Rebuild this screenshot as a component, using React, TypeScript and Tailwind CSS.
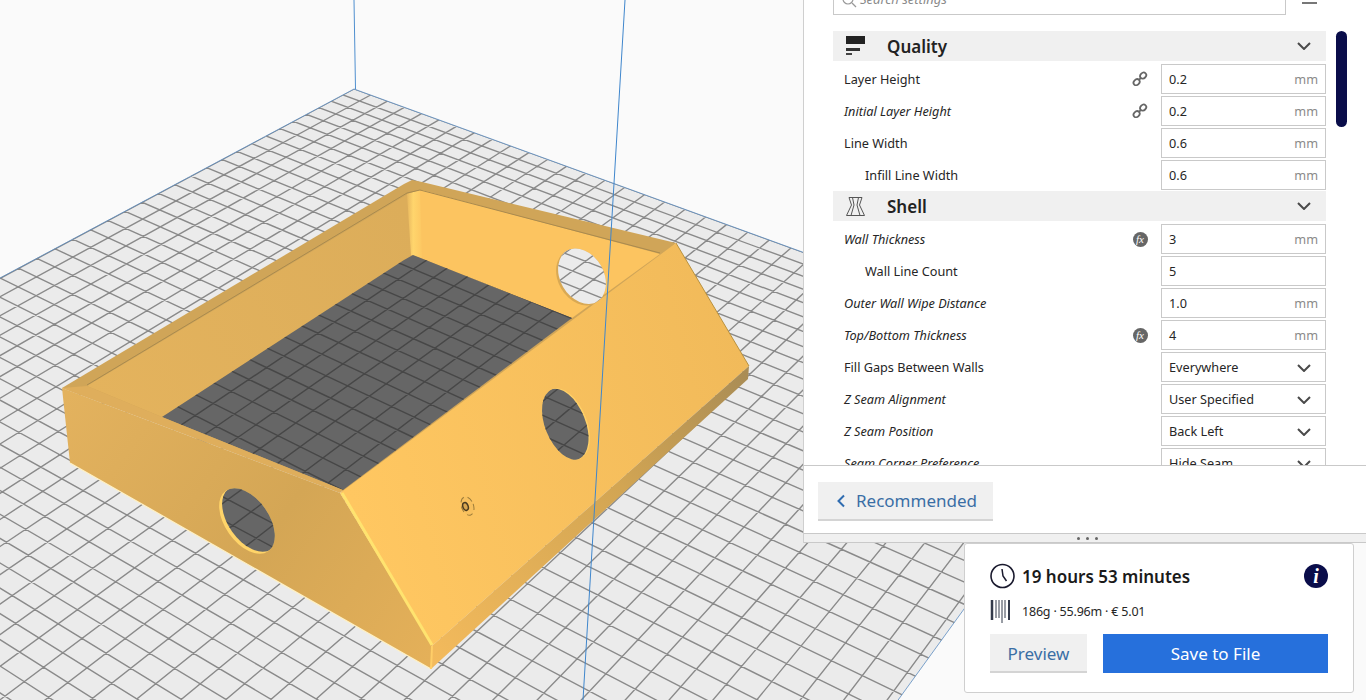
import React from "react";

const VA = [-2517, -956];
const VB = [1969, -775];
const CA = 2.0e-6;
function buildGrid() {
  let d = "";
  for (let s = 0; s <= 40; s++) {
    const t = 1 / (1 / 2871 - s * CA);
    const x = VA[0] + t;
    const y = VA[1] + t * (1045 / 2871);
    const ex = x + (x - VB[0]) * 1.5;
    const ey = y + (y - VB[1]) * 1.5;
    d += `M${x.toFixed(1)} ${y.toFixed(1)}L${ex.toFixed(1)} ${ey.toFixed(1)}`;
  }
  for (let k = -23; k <= 40; k++) {
    const y0 = 278 + 19 * k + 0.225 * k * k;
    const slope = (y0 - VA[1]) / (0 - VA[0]);
    const x1 = -300;
    const x2 = 1400;
    d += `M${x1} ${(y0 + slope * x1).toFixed(1)}L${x2} ${(y0 + slope * x2).toFixed(1)}`;
  }
  return d;
}
const GRID = buildGrid();

function Hole({ id, cx, cy, rx, ry, rot, dx, dy, rim, fill, line }: {
  id: string; cx: number; cy: number; rx: number; ry: number; rot: number; dx: number; dy: number; rim: string; fill: string; line: string;
}) {
  const outer = `rotate(${rot} ${cx} ${cy})`;
  const inner = `rotate(${rot} ${cx + dx} ${cy + dy})`;
  return (
    <>
      <clipPath id={`${id}o`}><ellipse cx={cx} cy={cy} rx={rx} ry={ry} transform={outer} /></clipPath>
      <clipPath id={`${id}i`}><ellipse cx={cx + dx} cy={cy + dy} rx={rx} ry={ry} transform={inner} /></clipPath>
      <ellipse cx={cx} cy={cy} rx={rx} ry={ry} transform={outer} fill={rim} />
      <g clipPath={`url(#${id}o)`}>
        <ellipse cx={cx + dx} cy={cy + dy} rx={rx} ry={ry} transform={inner} fill={fill} />
        <g clipPath={`url(#${id}i)`}>
          <path d={GRID} stroke={line} strokeWidth="1.4" fill="none" />
        </g>
      </g>
    </>
  );
}

function Scene() {
  return (
    <svg className="absolute inset-0" width="1366" height="700" viewBox="0 0 1366 700">
      <defs>
        <clipPath id="floor"><polygon points="-10,283 354,89 1135,373 880,725 -10,725" /></clipPath>
        <clipPath id="pit"><polygon points="162,417 404,260 413,255 572,318 343,490" /></clipPath>
        <linearGradient id="front" gradientUnits="userSpaceOnUse" x1="62" y1="400" x2="430" y2="660">
          <stop offset="0" stopColor="#e3b25e" />
          <stop offset="0.55" stopColor="#d4a655" />
          <stop offset="1" stopColor="#e4b059" />
        </linearGradient>
        <linearGradient id="slant" gradientUnits="userSpaceOnUse" x1="345" y1="480" x2="750" y2="370">
          <stop offset="0" stopColor="#ffc761" />
          <stop offset="1" stopColor="#f1ba5a" />
        </linearGradient>
        <linearGradient id="strip" gradientUnits="userSpaceOnUse" x1="432" y1="660" x2="749" y2="372">
          <stop offset="0" stopColor="#f3ba5c" />
          <stop offset="0.6" stopColor="#d2a553" />
          <stop offset="1" stopColor="#a98c55" />
        </linearGradient>
        <linearGradient id="lwall" gradientUnits="userSpaceOnUse" x1="87" y1="385" x2="410" y2="220">
          <stop offset="0" stopColor="#e4b35d" />
          <stop offset="1" stopColor="#dcad5a" />
        </linearGradient>
        <linearGradient id="corner" gradientUnits="userSpaceOnUse" x1="406" y1="220" x2="424" y2="220">
          <stop offset="0" stopColor="#e3b15c" />
          <stop offset="0.4" stopColor="#ffd56c" />
          <stop offset="1" stopColor="#fcc460" />
        </linearGradient>
      </defs>

      <rect width="1366" height="700" fill="#fafafa" />
      <polygon points="-10,283 354,89 1135,373 880,725 -10,725" fill="#ebebeb" />
      <path d={GRID} stroke="#8a8a8a" strokeWidth="1.4" clipPath="url(#floor)" fill="none" />
      <path d="M0 278L354 89L1135 373L880 725" stroke="#5a8cc0" strokeWidth="0.8" fill="none" />
      <path d="M354 0L355.5 89" stroke="#4f8fcf" strokeWidth="1" />

      {/* box rim + inner walls */}
      <polygon points="62,388 404,184 412,180 422,182 676,243 600,320 343,492" fill="#d0a558" />
      <polygon points="87,386 408,194 412,256 162,417" fill="url(#lwall)" />
      <polygon points="408,194 422,190 660,254 572,318 413,255" fill="#fcc460" />
      <polygon points="407,194 420,190 422,258 411,255" fill="url(#corner)" />
      <path d="M87 385L407 193L420 190L660 253" stroke="#a98a4f" strokeWidth="1" fill="none" />

      <Hole id="h3" cx={581} cy={277} rx={23} ry={30} rot={-30} dx={2} dy={-1.5} rim="#d9a954" fill="#ebebeb" line="#8a8a8a" />

      {/* pit: the plate seen through the open bottom */}
      <polygon points="162,417 404,260 413,255 572,318 343,490" fill="#666666" />
      <path d={GRID} stroke="#474747" strokeWidth="1.4" clipPath="url(#pit)" fill="none" />

      {/* front left wall */}
      <polygon points="62,388 87,386 162,417 343,490 340,493" fill="#dfae5c" />
      <polygon points="62,388 340,493 432,645 431,669 70,463" fill="url(#front)" />
      <path d="M70 463L431 669" stroke="#fff1c4" strokeWidth="1.2" />
      <Hole id="h1" cx={247} cy={521} rx={22} ry={37} rot={-35} dx={3} dy={-2} rim="#ffd469" fill="#666666" line="#474747" />

      {/* slanted front right face */}
      <polygon points="676,243 749,366 432,646 340,493" fill="url(#slant)" />
      <polygon points="749,366 748,379 431,669 432,646" fill="url(#strip)" />
      <path d="M432 646L431 669" stroke="#ffce68" strokeWidth="2" />
      <path d="M342 493L432 645" stroke="#ffe36f" strokeWidth="3" />
      <path d="M676 243L749 366" stroke="#b8913f" strokeWidth="1" />
      <Hole id="h2" cx={566} cy={424} rx={21} ry={37.5} rot={-22} dx={-1.5} dy={0.5} rim="#ffd067" fill="#666666" line="#474747" />
      <ellipse cx="467.5" cy="506" rx="6" ry="9.5" transform="rotate(-20 467.5 506)" fill="#f7c05e" stroke="#9c7c3b" strokeWidth="1" strokeDasharray="6 4" />
      <ellipse cx="465.5" cy="506.5" rx="2.6" ry="4" transform="rotate(-20 465.5 506.5)" fill="#d9a650" stroke="#4a3b20" strokeWidth="1.5" />

      <path d="M625 0L583 700" stroke="#3f86cc" strokeWidth="1" />
    </svg>
  );
}

const Chevron = () => (
  <svg width="14" height="8" viewBox="0 0 14 8" className="shrink-0">
    <path d="M1 1L7 7L13 1" fill="none" stroke="#4a4a4a" strokeWidth="2" />
  </svg>
);

const LinkIcon = () => (
  <svg width="16" height="16" viewBox="0 0 16 16">
    <g fill="none" stroke="#666" strokeWidth="1.8">
      <ellipse cx="4.6" cy="11.2" rx="3.3" ry="2.7" transform="rotate(-45 4.6 11.2)" />
      <ellipse cx="11.2" cy="4.6" rx="3.3" ry="2.7" transform="rotate(-45 11.2 4.6)" />
      <path d="M6.8 9L9 6.8" />
    </g>
  </svg>
);

const FxIcon = () => (
  <span className="flex h-[15px] w-[15px] items-center justify-center rounded-full bg-[#666666] font-['Liberation_Serif',serif] text-[11px] italic leading-none text-white">
    fx
  </span>
);

const QualityIcon = () => (
  <svg width="20" height="20" viewBox="0 0 20 20" className="shrink-0">
    <rect x="0" y="0" width="19" height="8" fill="#222" />
    <rect x="0" y="12" width="14" height="3" fill="#333" />
    <rect x="0" y="17" width="6" height="2" fill="#444" />
  </svg>
);

const ShellIcon = () => (
  <svg width="20" height="20" viewBox="0 0 20 20" className="shrink-0">
    <g fill="none" stroke="#555" strokeWidth="1">
      <path d="M3 1.5H16L13.5 9L18.5 19.5H0.5L5.5 9Z" />
      <path d="M6.5 1.5L8 9L5 19.5M12.5 1.5L11 9L14 19.5" />
    </g>
  </svg>
);

type Row = {
  label: string;
  value: string;
  italic?: boolean;
  indent?: boolean;
  icon?: "link" | "fx";
  unit?: boolean;
  select?: boolean;
};

const Setting = ({ label, value, italic, indent, icon, unit, select }: Row) => (
  <div className="flex h-8 items-center text-[12.7px] text-[#262626]">
    <span className={`${indent ? "pl-8" : "pl-[11px]"} ${italic ? "italic" : ""} flex-1 pt-[2px]`}>{label}</span>
    <span className="flex w-[16px] justify-center">
      {icon === "link" && <LinkIcon />}
      {icon === "fx" && <FxIcon />}
    </span>
    <div className="ml-[13px] flex h-[30px] w-[165px] items-center justify-between border border-[#c9c9c9] bg-white pl-[7px] pr-[7px] pt-[2px]">
      <span>{value}</span>
      {unit && <span className="text-[#8a8a8a]">mm</span>}
      {select && (
        <span className="mr-[7px] flex">
          <Chevron />
        </span>
      )}
    </div>
  </div>
);

const Section = ({ title, icon }: { title: string; icon: React.ReactNode }) => (
  <div className="flex h-[30px] items-center bg-[#f0f0f0] pl-[13px] pr-[15px]">
    {icon}
    <span className="ml-[21px] flex-1 text-[17px] font-semibold leading-none text-[#222]">{title}</span>
    <Chevron />
  </div>
);

const quality: Row[] = [
  { label: "Layer Height", value: "0.2", icon: "link", unit: true },
  { label: "Initial Layer Height", value: "0.2", italic: true, icon: "link", unit: true },
  { label: "Line Width", value: "0.6", unit: true },
  { label: "Infill Line Width", value: "0.6", indent: true, unit: true },
];

const shell: Row[] = [
  { label: "Wall Thickness", value: "3", italic: true, icon: "fx", unit: true },
  { label: "Wall Line Count", value: "5", indent: true },
  { label: "Outer Wall Wipe Distance", value: "1.0", italic: true, unit: true },
  { label: "Top/Bottom Thickness", value: "4", italic: true, icon: "fx", unit: true },
  { label: "Fill Gaps Between Walls", value: "Everywhere", select: true },
  { label: "Z Seam Alignment", value: "User Specified", italic: true, select: true },
  { label: "Z Seam Position", value: "Back Left", italic: true, select: true },
  { label: "Seam Corner Preference", value: "Hide Seam", italic: true, select: true },
];

export default function App() {
  return (
    <div className="relative h-[700px] w-[1366px] overflow-hidden bg-[#fafafa] font-['Noto_Sans',sans-serif]">
      <Scene />

      <div className="absolute right-0 top-0 flex h-[543px] w-[563px] flex-col border-l border-[#cfcfcf] bg-white">
        <div className="h-[465px] shrink-0 overflow-hidden pl-[29px]">
          <div className="-mt-[15px] w-[493px]">
            <div className="flex h-[30px] items-center">
              <div className="flex h-[30px] w-[453px] shrink-0 items-center gap-[3px] border border-[#c9c9c9] pl-[7px] text-[13px] italic text-[#8a8a8a]">
                <svg width="16" height="16" viewBox="0 0 16 16" className="shrink-0">
                  <circle cx="7" cy="7" r="5" fill="none" stroke="#999" strokeWidth="1.2" />
                  <path d="M11 11L15 15" stroke="#999" strokeWidth="1.2" />
                </svg>
                Search settings
              </div>
              <svg width="16" height="12" viewBox="0 0 16 12" className="ml-[16px] shrink-0">
                <rect x="0" y="0" width="15" height="2" fill="#777" />
                <rect x="0" y="8" width="15" height="2" fill="#777" />
              </svg>
            </div>
            <div className="mt-4">
              <Section title="Quality" icon={<QualityIcon />} />
              <div className="pt-[2px]">
                {quality.map((r) => (
                  <Setting key={r.label} {...r} />
                ))}
              </div>
              <Section title="Shell" icon={<ShellIcon />} />
              <div className="pt-[2px]">
                {shell.map((r) => (
                  <Setting key={r.label} {...r} />
                ))}
              </div>
            </div>
          </div>
        </div>
        <div className="flex h-[68px] shrink-0 items-start border-t border-[#c9c9c9] pl-[14px] pt-[16px]">
          <button className="flex h-[39px] w-[175px] items-center gap-[10px] border-b-2 border-[#d4d4d4] bg-[#f0f0f0] pl-[18px] text-[17px] text-[#3a6ea5]">
            <svg width="10" height="14" viewBox="0 0 10 14" className="shrink-0">
              <path d="M8 1.5L2.5 7L8 12.5" fill="none" stroke="#2f6cb0" strokeWidth="2" />
            </svg>
            Recommended
          </button>
        </div>
        <div className="flex h-[10px] shrink-0 items-center justify-center gap-[6px] border-y border-[#c9c9c9] bg-[#f0f0f0] pl-[4px]">
          <span className="h-[3px] w-[3px] rounded-full bg-[#666]" />
          <span className="h-[3px] w-[3px] rounded-full bg-[#666]" />
          <span className="h-[3px] w-[3px] rounded-full bg-[#666]" />
        </div>
        <div className="absolute left-[532px] top-[31px] h-[96px] w-[11px] rounded-full bg-[#0a0d4a]" />
      </div>

      <div className="absolute right-[12px] top-[543px] h-[150px] w-[390px] rounded-[3px] border border-[#cfcfcf] bg-white px-[25px] pt-[19px]">
        <div className="flex h-[26px] items-center">
          <svg width="26" height="26" viewBox="0 0 26 26" className="shrink-0">
            <circle cx="12.5" cy="13" r="11.5" fill="none" stroke="#1a1a2e" strokeWidth="1.6" />
            <path d="M12 6L13 13L16.5 18" fill="none" stroke="#1a1a2e" strokeWidth="1.5" />
          </svg>
          <span className="ml-[6px] flex-1 pt-[2px] text-[17px] font-semibold text-[#1a1a1a]">19 hours 53 minutes</span>
          <span className="flex h-[24px] w-[24px] items-center justify-center rounded-full bg-[#0a0d4a] font-['Liberation_Serif',serif] text-[20px] font-bold italic leading-none text-white">
            i
          </span>
        </div>
        <div className="mt-[9px] flex h-[26px] items-center">
          <svg width="22" height="24" viewBox="0 0 22 24" className="shrink-0">
            <g stroke="#333a4a">
              <path d="M2 1V21" strokeWidth="2.5" />
              <path d="M6 1V19M9 1V19M15 1V19" strokeWidth="1" />
              <path d="M12 1V24" strokeWidth="1" />
              <path d="M19 1V21" strokeWidth="2" />
            </g>
          </svg>
          <span className="ml-[10px] pt-[2px] text-[12.5px] tracking-[-0.2px] text-[#262626]">186g · 55.96m · € 5.01</span>
        </div>
        <div className="mt-[10px] flex gap-4">
          <button className="h-[39px] w-[97px] border-b-2 border-[#d4d4d4] bg-[#f0f0f0] pt-[2px] text-[17px] text-[#3a6ea5]">Preview</button>
          <button className="h-[39px] w-[225px] bg-[#2670dc] text-[17px] text-white">Save to File</button>
        </div>
      </div>
    </div>
  );
}
